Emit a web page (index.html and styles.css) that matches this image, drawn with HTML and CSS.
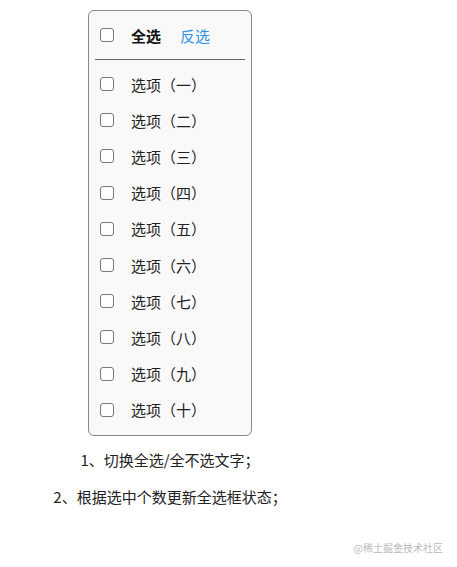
FILE: index.html
```html
<!DOCTYPE html>
<html>
    <head>
        <title>全选 / 反选</title>
        <link rel="stylesheet" href="styles.css">
    </head>
    <body>
        <div class="wrap">

            <div class="box">

                <div class="head">
                    <input type="checkbox" class="check" id="all">
                    <label for="all" class="all">全选</label>
                    <span class="invert">反选</span>
                </div>

                <div class="line"></div>

                <div class="list">
                    <div class="item"><input type="checkbox" class="check"><span>选项（一）</span></div>
                    <div class="item"><input type="checkbox" class="check"><span>选项（二）</span></div>
                    <div class="item"><input type="checkbox" class="check"><span>选项（三）</span></div>
                    <div class="item"><input type="checkbox" class="check"><span>选项（四）</span></div>
                    <div class="item"><input type="checkbox" class="check"><span>选项（五）</span></div>
                    <div class="item"><input type="checkbox" class="check"><span>选项（六）</span></div>
                    <div class="item"><input type="checkbox" class="check"><span>选项（七）</span></div>
                    <div class="item"><input type="checkbox" class="check"><span>选项（八）</span></div>
                    <div class="item"><input type="checkbox" class="check"><span>选项（九）</span></div>
                    <div class="item"><input type="checkbox" class="check"><span>选项（十）</span></div>
                </div>

            </div>

            <p class="note">1、切换全选/全不选文字；</p>
            <p class="note">2、根据选中个数更新全选框状态；</p>

        </div>

        <div class="mark">@稀土掘金技术社区</div>
    </body>
</html>
```

FILE: styles.css
```css
body {

    margin: 8px;
    font-family: "Noto Sans CJK SC", "Microsoft YaHei", sans-serif;
    font-size: 15px;
    color: #222;

}

.wrap {

    width: 324px;
    text-align: center;

}

.box {

    width: 150px;
    margin: 2px auto 0;
    padding: 0 6px 7px;
    border: 1px solid #888;
    border-radius: 6px;
    background-color: #f9f9f9;
    text-align: left;

}

.head {

    height: 48px;
    display: flex;
    align-items: center;
    padding-left: 5px;

}

.check {

    appearance: none;
    -webkit-appearance: none;
    width: 14px;
    height: 14px;
    margin: 0 17px 0 0;
    border: 1px solid #777;
    border-radius: 3px;
    background-color: #fff;
    flex: none;

}

.all {

    font-weight: bold;
    color: #111;

}

.invert {

    margin-left: 19px;
    color: #2f93e6;
    cursor: pointer;

}

.line {

    height: 1px;
    background-color: #666;

}

.list {

    padding-top: 6px;

}

.item {

    height: 36.2px;
    display: flex;
    align-items: center;
    padding-left: 5px;

}

.note {

    margin: 13px 0 0;
    line-height: 22px;

}

.note + .note {

    margin-top: 15px;

}

.mark {

    position: absolute;
    right: 14px;
    bottom: 12px;
    font-size: 10px;
    color: #bbb;

}
```
